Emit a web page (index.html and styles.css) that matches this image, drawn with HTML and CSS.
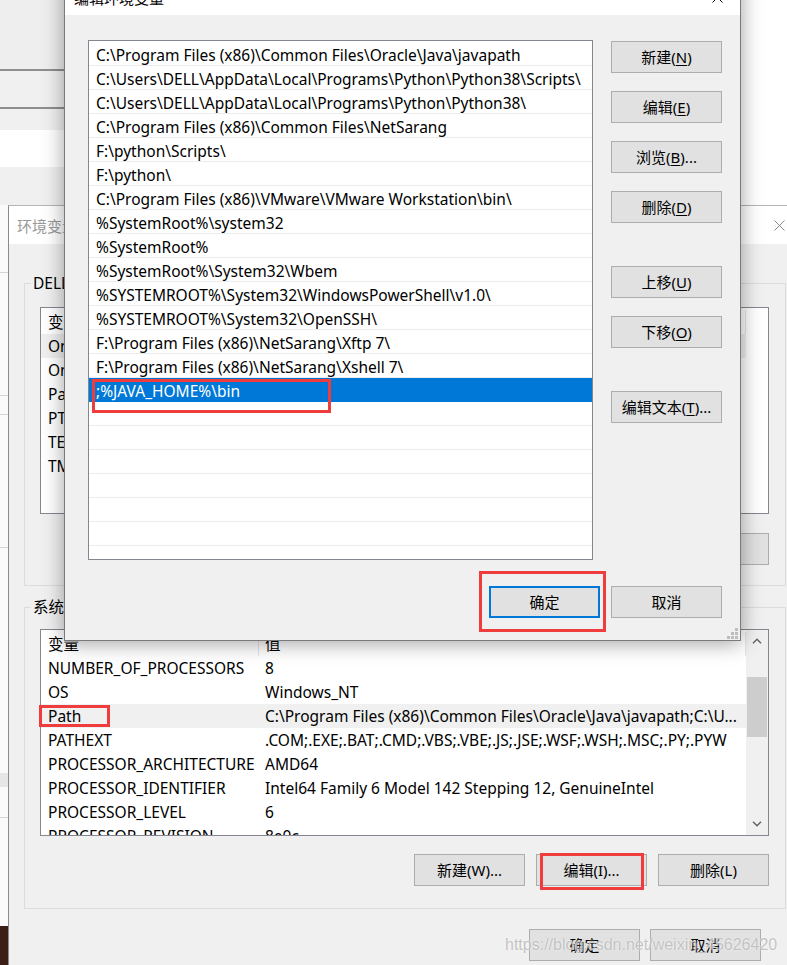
FILE: index.html
```html
<!DOCTYPE html>
<html lang="zh-CN">
<head>
<meta charset="utf-8">
<title>编辑环境变量</title>
<link rel="stylesheet" href="styles.css">
</head>
<body>
<div class="desk">
  <div class="back-top">
    <div class="bt-a"></div>
    <div class="bt-line"></div>
    <div class="bt-b"></div>
    <div class="bt-line"></div>
    <div class="bt-c"></div>
    <div class="bt-white"></div>
  </div>
  <div class="back-left">
    <div class="bl-sp s1"></div><div class="bl-line"></div>
    <div class="bl-sp s2"></div><div class="bl-line"></div>
    <div class="bl-sp s3"></div><div class="bl-line"></div>
    <div class="bl-sp s4"></div><div class="bl-line"></div>
    <div class="bl-sp s5"></div><div class="bl-band"></div>
    <div class="bl-sp s6"></div><div class="bl-line"></div>
    <div class="bl-sp s7"></div><div class="bl-dark"></div>
  </div>

  <div class="env">
    <div class="env-title">
      <span class="env-title-text">环境变量</span>
      <span class="xbtn"><svg width="11" height="11" viewBox="0 0 11 11"><path d="M0.5 0.5L10.5 10.5M10.5 0.5L0.5 10.5" stroke="#8a8a8a" stroke-width="1" fill="none"/></svg></span>
    </div>
    <div class="env-body">
      <fieldset class="group g1">
        <legend>DELL 的用户变量(U)</legend>
        <div class="lv">
          <div class="lv-main">
            <div class="lv-head"><div class="c1">变量</div><div class="c2">值</div></div>
            <div class="lv-row hl"><div class="c1">OneDrive</div><div class="c2">C:\Users\DELL\OneDrive</div></div>
            <div class="lv-row"><div class="c1">OneDriveConsumer</div><div class="c2">C:\Users\DELL\OneDrive</div></div>
            <div class="lv-row"><div class="c1">Path</div><div class="c2">%USERPROFILE%\AppData\Local\Microsoft</div></div>
            <div class="lv-row"><div class="c1">PT</div><div class="c2">F:\</div></div>
            <div class="lv-row"><div class="c1">TEMP</div><div class="c2">%USERPROFILE%\AppData\Local\Temp</div></div>
            <div class="lv-row"><div class="c1">TMP</div><div class="c2">%USERPROFILE%\AppData\Local\Temp</div></div>
          </div>
        </div>
        <div class="btnrow">
          <button class="btn">新建(N)...</button>
          <button class="btn">编辑(E)...</button>
          <button class="btn">删除(D)</button>
        </div>
      </fieldset>

      <fieldset class="group g2">
        <legend>系统变量(S)</legend>
        <div class="lv">
          <div class="lv-main">
            <div class="lv-head"><div class="c1">变量</div><div class="c2">值</div></div>
            <div class="lv-row"><div class="c1">NUMBER_OF_PROCESSORS</div><div class="c2">8</div></div>
            <div class="lv-row"><div class="c1">OS</div><div class="c2">Windows_NT</div></div>
            <div class="lv-row hl"><div class="c1">Path</div><div class="c2">C:\Program Files (x86)\Common Files\Oracle\Java\javapath;C:\U...</div></div>
            <div class="lv-row"><div class="c1">PATHEXT</div><div class="c2">.COM;.EXE;.BAT;.CMD;.VBS;.VBE;.JS;.JSE;.WSF;.WSH;.MSC;.PY;.PYW</div></div>
            <div class="lv-row"><div class="c1">PROCESSOR_ARCHITECTURE</div><div class="c2">AMD64</div></div>
            <div class="lv-row"><div class="c1">PROCESSOR_IDENTIFIER</div><div class="c2">Intel64 Family 6 Model 142 Stepping 12, GenuineIntel</div></div>
            <div class="lv-row"><div class="c1">PROCESSOR_LEVEL</div><div class="c2">6</div></div>
            <div class="lv-row"><div class="c1">PROCESSOR_REVISION</div><div class="c2">8e0c</div></div>
          </div>
          <div class="vscroll">
            <div class="sb-arrow"><svg width="10" height="6" viewBox="0 0 10 6"><path d="M1 5.2L5 1.2L9 5.2" stroke="#606060" stroke-width="1.4" fill="none"/></svg></div>
            <div class="sb-track"><div class="sb-thumb"></div></div>
            <div class="sb-arrow"><svg width="10" height="6" viewBox="0 0 10 6"><path d="M1 0.8L5 4.8L9 0.8" stroke="#606060" stroke-width="1.4" fill="none"/></svg></div>
          </div>
        </div>
        <div class="btnrow b2">
          <button class="btn">新建(W)...</button>
          <button class="btn">编辑(I)...</button>
          <button class="btn">删除(L)</button>
        </div>
      </fieldset>

      <div class="dlg-btns">
        <button class="btn">确定</button>
        <button class="btn">取消</button>
      </div>
    </div>
  </div>

  <div class="edit">
    <div class="edit-title">
      <span class="edit-title-text">编辑环境变量</span>
      <span class="xbtn dark"><svg width="11" height="11" viewBox="0 0 11 11"><path d="M0.5 0.5L10.5 10.5M10.5 0.5L0.5 10.5" stroke="#000" stroke-width="1" fill="none"/></svg></span>
    </div>
    <div class="edit-body">
      <div class="edit-main">
        <div class="elist">
          <div class="er">C:\Program Files (x86)\Common Files\Oracle\Java\javapath</div>
          <div class="er">C:\Users\DELL\AppData\Local\Programs\Python\Python38\Scripts\</div>
          <div class="er">C:\Users\DELL\AppData\Local\Programs\Python\Python38\</div>
          <div class="er">C:\Program Files (x86)\Common Files\NetSarang</div>
          <div class="er">F:\python\Scripts\</div>
          <div class="er">F:\python\</div>
          <div class="er">C:\Program Files (x86)\VMware\VMware Workstation\bin\</div>
          <div class="er">%SystemRoot%\system32</div>
          <div class="er">%SystemRoot%</div>
          <div class="er">%SystemRoot%\System32\Wbem</div>
          <div class="er">%SYSTEMROOT%\System32\WindowsPowerShell\v1.0\</div>
          <div class="er">%SYSTEMROOT%\System32\OpenSSH\</div>
          <div class="er">F:\Program Files (x86)\NetSarang\Xftp 7\</div>
          <div class="er">F:\Program Files (x86)\NetSarang\Xshell 7\</div>
          <div class="er sel">;%JAVA_HOME%\bin</div>
          <div class="er"></div><div class="er"></div><div class="er"></div><div class="er"></div>
          <div class="er"></div><div class="er"></div><div class="er"></div>
        </div>
        <div class="ebtns">
          <button class="btn">新建(<u>N</u>)</button>
          <button class="btn">编辑(<u>E</u>)</button>
          <button class="btn">浏览(<u>B</u>)...</button>
          <button class="btn">删除(<u>D</u>)</button>
          <button class="btn gap">上移(<u>U</u>)</button>
          <button class="btn">下移(<u>O</u>)</button>
          <button class="btn gap">编辑文本(<u>T</u>)...</button>
        </div>
      </div>
      <div class="edit-foot">
        <button class="btn default">确定</button>
        <button class="btn">取消</button>
      </div>
    </div>
    <div class="grip"><svg width="11" height="11" viewBox="0 0 11 11"><g fill="#bdbdbd"><rect x="8" y="0" width="3" height="3"/><rect x="4" y="4" width="3" height="3"/><rect x="8" y="4" width="3" height="3"/><rect x="0" y="8" width="3" height="3"/><rect x="4" y="8" width="3" height="3"/><rect x="8" y="8" width="3" height="3"/></g></svg></div>
  </div>

  <div class="mark m-sel"></div>
  <div class="mark m-ok"></div>
  <div class="mark m-path"></div>
  <div class="mark m-edit"></div>
  <div class="watermark">https://blog.csdn.net/weixin_45626420</div>
</div>
</body>
</html>
```

FILE: styles.css
```css
* { box-sizing: border-box; }
html, body { margin: 0; padding: 0; }
body {
  width: 787px; height: 965px; overflow: hidden;
  font-family: "Noto Sans", "Noto Sans CJK SC", sans-serif;
  font-size: 15.5px; color: #000;
}
.desk { position: relative; width: 787px; height: 965px; overflow: hidden; background: #fff; }

/* background windows */
.back-top { position: absolute; left: 0; top: 0; width: 300px; height: 205px; background: #f0f0f0; display: flex; flex-direction: column; }
.bt-a { height: 69px; background: #eeeeee; }
.bt-line { height: 2px; background: #8e8e8e; }
.bt-b { height: 36px; background: #f0f0f0; }
.bt-c { height: 21px; background: #f0f0f0; }
.bt-white { height: 37px; background: #ffffff; }

.back-left { position: absolute; left: 0; top: 205px; width: 9px; height: 760px; background: #fafafa; display: flex; flex-direction: column; }
.bl-line { height: 1px; background: #d4d4d4; }
.bl-band { height: 14px; background: #e6e6e6; }
.bl-dark { flex: 1; background: #3b1e16; }
.s1 { height: 67px; } .s2 { height: 122px; } .s3 { height: 18px; } .s4 { height: 132px; }
.s5 { height: 225px; } .s6 { height: 30px; } .s7 { height: 108px; }

/* environment variables dialog */
.env {
  position: absolute; left: 8px; top: 205px; width: 794px; height: 780px;
  background: #f0f0f0; border-left: 1px solid #8a8a8a; border-top: 1px solid #b5b5b5;
  display: flex; flex-direction: column;
}
.env-title { height: 38px; background: #fff; display: flex; justify-content: space-between; align-items: center; padding-left: 8px; color: #999; font-size: 15px; }
.xbtn { width: 46px; height: 100%; display: flex; align-items: center; justify-content: center; }
.env-body { padding: 29px 0 0 15px; }

.group { margin: 0; width: 762px; border: 1px solid #dcdcdc; padding: 0 16px 20px 6px; min-width: 0; }
.group legend { padding: 0 2px; line-height: 20px; }
.g2 { margin-top: 11px; padding-bottom: 22px; }

.lv { margin: 14px 0 0 9px; width: 729px; height: 207px; background: #fff; border: 1px solid #828790; display: flex; overflow: hidden; }
.g2 .lv { margin-top: 12px; }
.lv-main { width: 705px; flex: none; }
.lv-head { display: flex; height: 26px; padding-top: 2px; line-height: 24px; }
.lv-head .c1 { width: 218px; border-right: 1px solid #e5e5e5; padding-left: 7px; }
.lv-head .c2 { width: 487px; border-right: 1px solid #e5e5e5; padding-left: 6px; }
.lv-row { display: flex; height: 24px; line-height: 24px; white-space: nowrap; }
.lv-row .c1 { width: 218px; padding-left: 7px; overflow: hidden; }
.lv-row .c2 { width: 487px; padding-left: 6px; overflow: hidden; }
.lv-row.hl { background: #f0f0f0; }

.vscroll { width: 22px; flex: none; background: #f0f0f0; display: flex; flex-direction: column; }
.sb-arrow { height: 22px; display: flex; align-items: center; justify-content: center; }
.sb-track { flex: 1; padding: 25px 1px 0 1px; }
.sb-thumb { height: 60px; background: #cdcdcd; }

.btnrow { display: flex; justify-content: flex-end; gap: 11px; margin-top: 19px; padding-right: 0; }
.b2 { margin-top: 18px; }

.btn {
  width: 111px; height: 32px; margin: 0; padding: 0;
  background: #e1e1e1; border: 1px solid #adadad; border-radius: 0;
  font-family: "Noto Sans", "Noto Sans CJK SC", sans-serif; font-size: 15px; color: #000;
  line-height: 20px;
}
.btn u { text-decoration: underline; text-underline-offset: 2px; text-decoration-thickness: 1px; }
.btn.default { border: 2px solid #0078d7; }

.dlg-btns { width: 762px; display: flex; justify-content: flex-end; gap: 10px; margin-top: 20px; padding-right: 25px; }

/* edit dialog */
.edit {
  position: absolute; left: 64px; top: -30px; width: 677px; height: 671px;
  background: #f0f0f0; border: 1px solid #7a7a7a;
  box-shadow: 0 2px 20px rgba(0,0,0,0.38);
  display: flex; flex-direction: column;
}
.edit-title { height: 44px; background: #fff; display: flex; justify-content: space-between; align-items: flex-start; padding-left: 9px; flex: none; font-size: 15px; }
.edit-title-text { padding-top: 15px; line-height: 24px; }
.edit-title .xbtn { height: auto; padding-top: 21px; }
.edit-body { padding: 25px 0 0 23px; }
.edit-main { display: flex; gap: 18px; align-items: flex-start; }
.elist { width: 505px; height: 520px; background: #fff; border: 1px solid #828790; padding-top: 1px; overflow: hidden; flex: none; }
.er { height: 24px; border-bottom: 1px solid #ececec; padding: 3px 0 0 7px; line-height: 20px; white-space: nowrap; overflow: hidden; }
.er.sel { background: #0078d7; border-bottom-color: #0078d7; color: #fff; }
.ebtns { display: flex; flex-direction: column; gap: 18px; padding-top: 1px; }
.ebtns .gap { margin-top: 25px; }
.edit-foot { width: 634px; display: flex; justify-content: flex-end; gap: 11px; margin-top: 26px; }
.grip { position: absolute; right: 2px; bottom: 1px; width: 11px; height: 11px; line-height: 0; }

/* annotations */
.mark { position: absolute; border: 3px solid #ef3d3d; }
.m-sel { left: 92px; top: 379px; width: 239px; height: 34px; }
.m-ok { left: 479px; top: 571px; width: 127px; height: 61px; }
.m-path { left: 39px; top: 705px; width: 71px; height: 22px; }
.m-edit { left: 540px; top: 853px; width: 104px; height: 37px; }

.watermark {
  position: absolute; left: 505px; top: 933px;
  font-family: "Liberation Sans", sans-serif; font-size: 16px; line-height: 24px;
  color: rgba(185,185,185,0.85); text-shadow: 0 0 2px rgba(255,255,255,0.9);
  white-space: nowrap;
}
```
